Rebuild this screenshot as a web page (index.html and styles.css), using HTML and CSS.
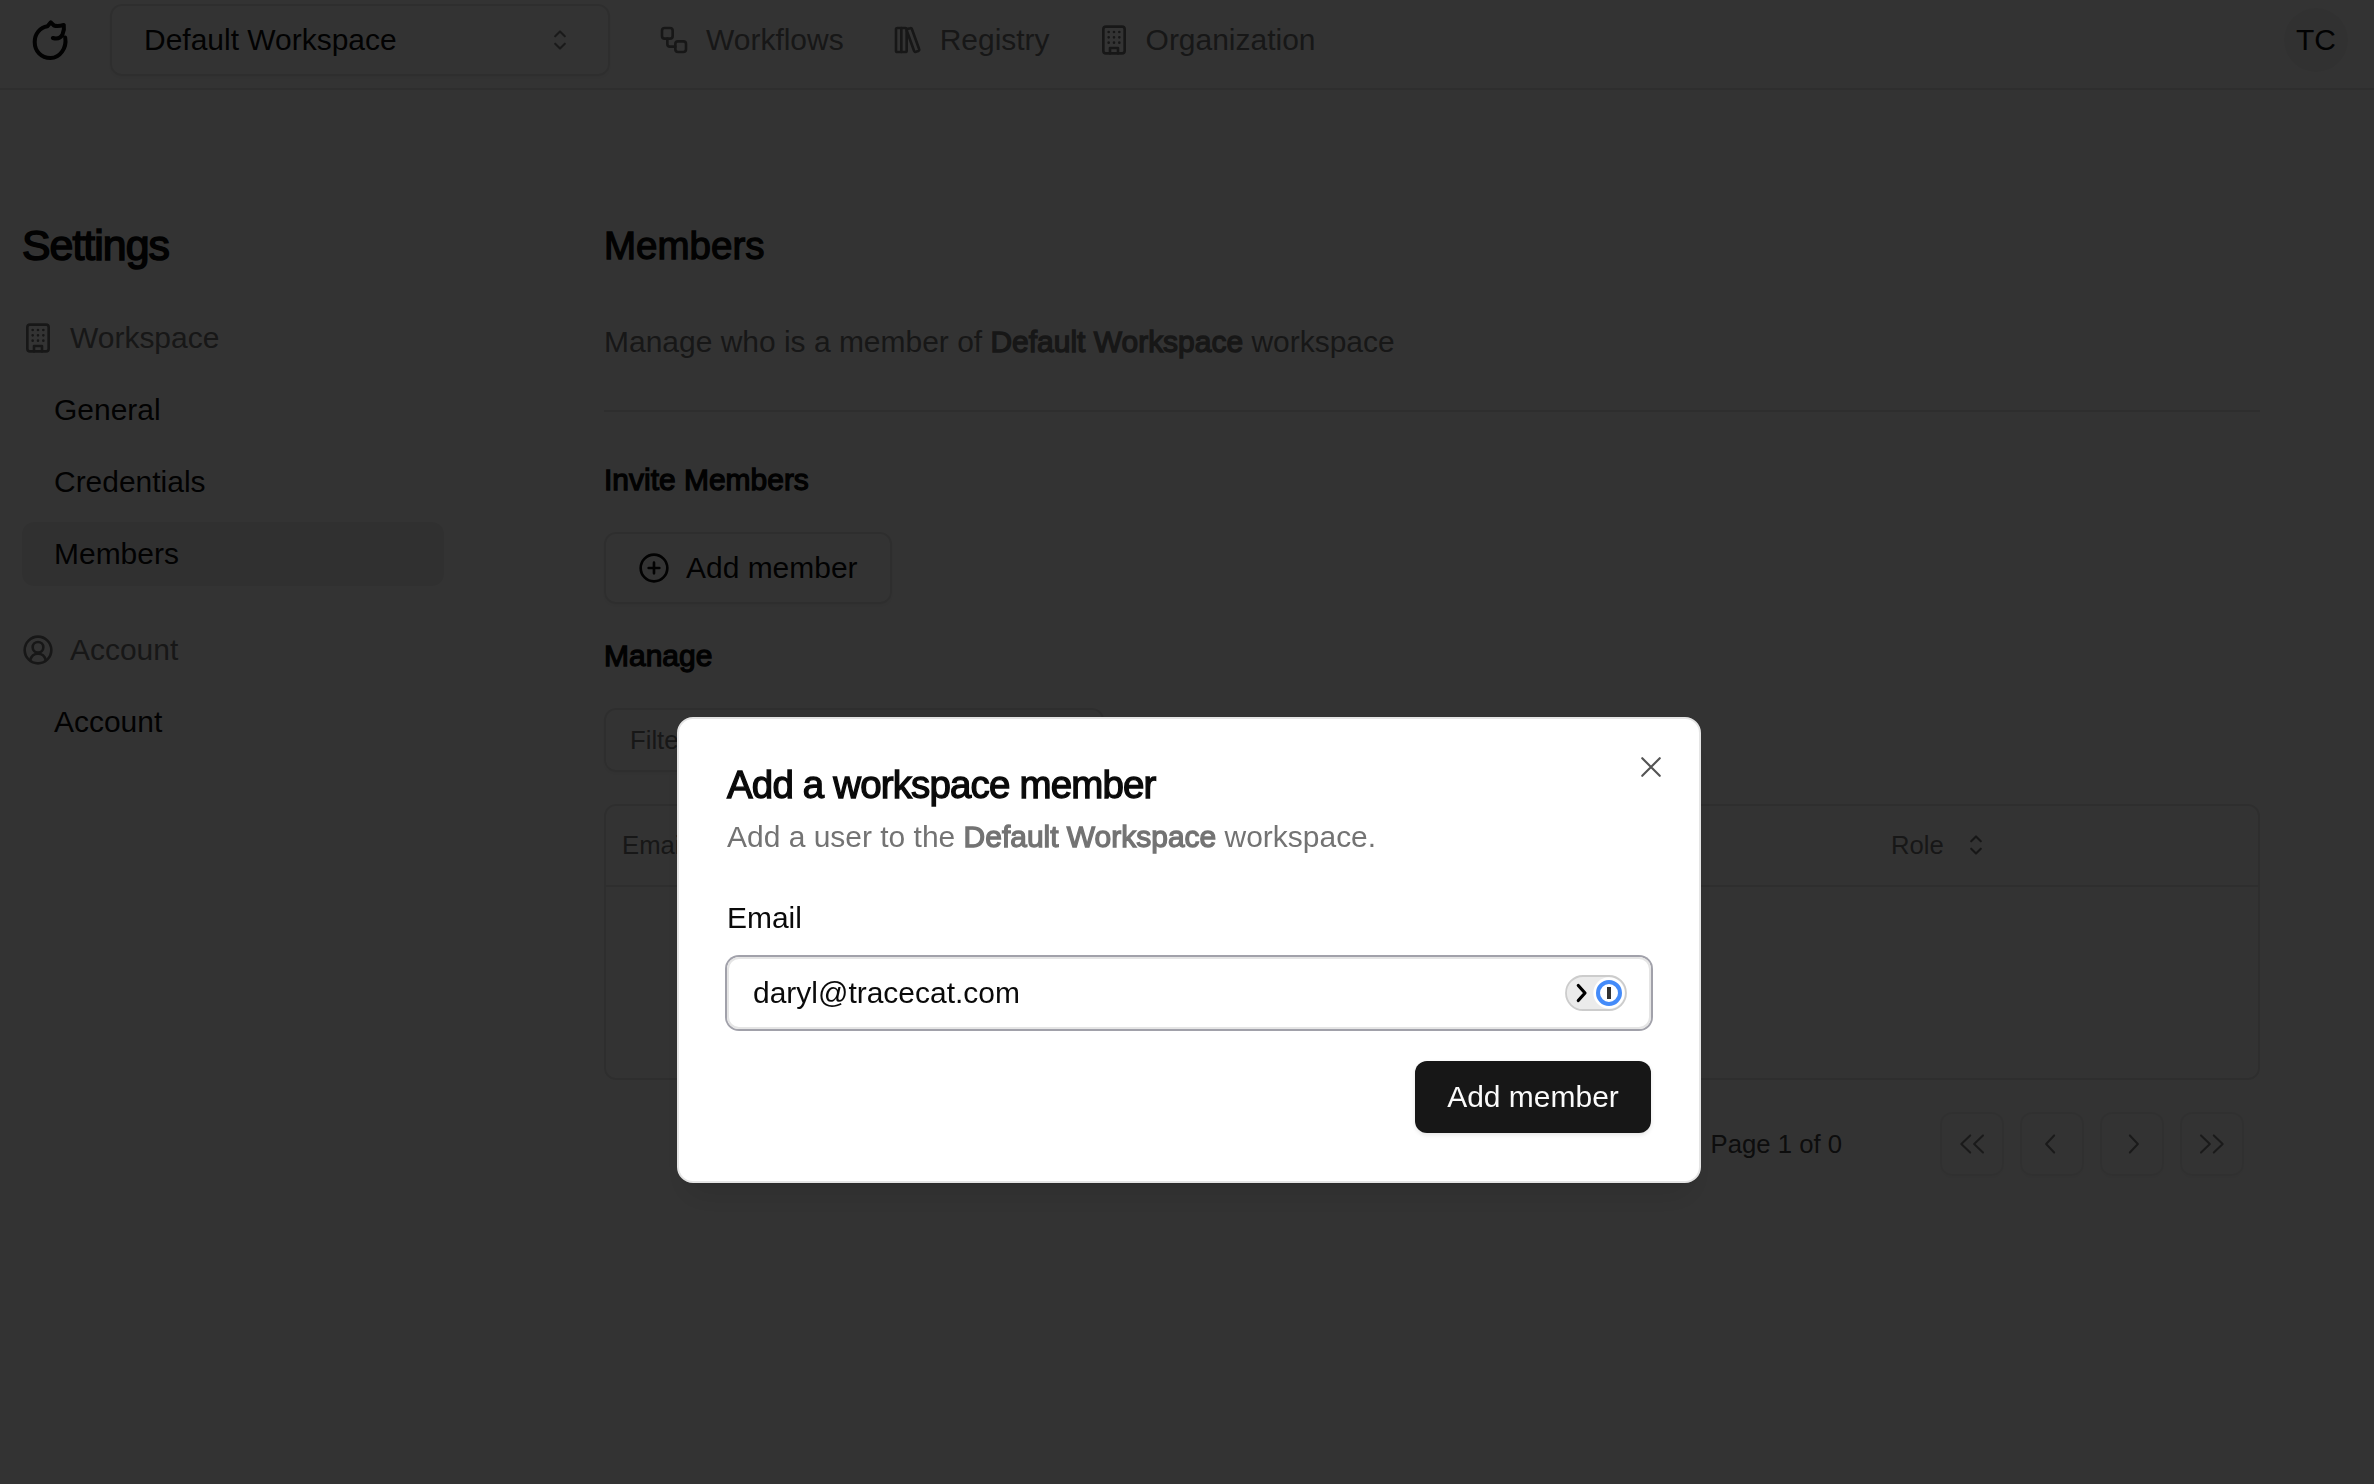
FILE: index.html
```html
<!DOCTYPE html>
<html lang="en">
<head>
<meta charset="utf-8">
<title>Workspace members</title>
<link rel="stylesheet" href="styles.css">
</head>
<body>
<svg class="sprite" aria-hidden="true">
  <symbol id="building" viewBox="0 0 24 24"><rect x="4" y="2" width="16" height="20" rx="2"/><path d="M9 22v-4h6v4M8 6h.01M16 6h.01M12 6h.01M12 10h.01M12 14h.01M16 10h.01M16 14h.01M8 10h.01M8 14h.01"/></symbol>
  <symbol id="sort" viewBox="0 0 15 15"><path d="M5.25 5.75 7.5 3.5l2.25 2.25M5.25 9.25 7.5 11.5l2.25-2.25"/></symbol>
</svg>

<div class="app">
  <header class="topbar">
    <svg class="logo" viewBox="0 0 40 44"><path d="M35.200 21.500C37 32 30 42 20.500 42 11 42 4.700 35 4.700 26 4.700 18 10 11.500 17.500 10.300L20.800 6.300 24 9.500C27 10.500 30 10 33.800 9 34.300 12 34 15 32.500 18.500 30.500 22.300 27.500 23.300 22.800 22"/></svg>
    <button class="select"><span>Default Workspace</span><svg class="radix faded"><use href="#sort"/></svg></button>
    <nav class="nav">
      <a><svg class="lucide" viewBox="0 0 24 24"><rect width="8" height="8" x="3" y="3" rx="2"/><path d="M7 11v4a2 2 0 0 0 2 2h4"/><rect width="8" height="8" x="13" y="13" rx="2"/></svg>Workflows</a>
      <a><svg class="lucide" viewBox="0 0 24 24"><rect width="8" height="18" x="3" y="3" rx="1"/><path d="M7 3v18M20.400 18.900c.2.5-.1 1.100-.6 1.300l-1.900.7c-.5.2-1.100-.1-1.300-.6L11.100 5.100c-.2-.5.1-1.100.6-1.300l1.900-.7c.5-.2 1.100.1 1.300.6Z"/></svg>Registry</a>
      <a><svg class="lucide" viewBox="0 0 24 24"><use href="#building"/></svg>Organization</a>
    </nav>
    <div class="avatar">TC</div>
  </header>

  <div class="page">
    <aside class="sidebar">
      <h2 class="sidebar-title">Settings</h2>
      <div class="group"><svg class="lucide"><use href="#building"/></svg>Workspace</div>
      <a class="item">General</a>
      <a class="item">Credentials</a>
      <a class="item active">Members</a>
      <div class="group second"><svg class="lucide" viewBox="0 0 24 24"><circle cx="12" cy="12" r="10"/><circle cx="12" cy="10" r="4"/><path d="M6.200 19.500C7 16.500 9 14.800 12 14.800s5 1.700 5.800 4.700"/></svg>Account</div>
      <a class="item">Account</a>
    </aside>

    <main class="content">
      <h1 class="title">Members</h1>
      <p class="lead">Manage who is a member of <b>Default Workspace</b> workspace</p>
      <hr class="rule">
      <h3 class="section">Invite Members</h3>
      <button class="outline"><svg class="lucide" viewBox="0 0 24 24"><circle cx="12" cy="12" r="10"/><path d="M8 12h8M12 8v8"/></svg>Add member</button>
      <h3 class="section manage">Manage</h3>
      <div class="filter">Filter emails...</div>
      <div class="table">
        <div class="thead"><span class="col-email">Email</span><span class="col-role">Role<svg class="radix"><use href="#sort"/></svg></span></div>
        <div class="tbody"></div>
      </div>
      <div class="pager">
        <span class="page-count">Page 1 of 0</span>
        <button class="page-btn"><svg class="radix" viewBox="0 0 15 15"><path d="M6.650 3.500 2.500 7.500l4.150 4M12.650 3.500 8.500 7.500l4.150 4"/></svg></button>
        <button class="page-btn"><svg class="radix" viewBox="0 0 15 15"><path d="M8.500 3.500 4.750 7.500l3.750 4"/></svg></button>
        <button class="page-btn"><svg class="radix" viewBox="0 0 15 15"><path d="m6.500 3.500 3.750 4-3.750 4"/></svg></button>
        <button class="page-btn"><svg class="radix" viewBox="0 0 15 15"><path d="m2.350 3.500 4.150 4-4.150 4M8.350 3.500l4.150 4-4.150 4"/></svg></button>
      </div>
    </main>
  </div>
</div>

<div class="overlay">
  <div class="dialog" role="dialog">
    <svg class="close" viewBox="0 0 15 15"><path d="m3.400 3.400 8.200 8.200M11.600 3.400l-8.200 8.200"/></svg>
    <h2 class="dialog-title">Add a workspace member</h2>
    <p class="dialog-text">Add a user to the <b>Default Workspace</b> workspace.</p>
    <label class="label">Email</label>
    <div class="input">
      <span>daryl@tracecat.com</span>
      <svg class="pill" viewBox="0 0 62 36"><rect x="1" y="1" width="60" height="34" rx="17" fill="#ebebeb"/><circle cx="44" cy="18" r="15.700" fill="#fff"/><rect x="1" y="1" width="60" height="34" rx="17" fill="none" stroke="#ccc" stroke-width="1.800"/><circle cx="44" cy="18" r="11" fill="none" stroke="#448bf9" stroke-width="4"/><rect x="42" y="12" width="4" height="12" fill="#333"/><path d="m13.300 10.500 6.700 7.500-6.700 7.500" fill="none" stroke="#000" stroke-width="3.200" stroke-linecap="round" stroke-linejoin="round"/></svg>
    </div>
    <button class="primary">Add member</button>
  </div>
</div>
</body>
</html>
```

FILE: styles.css
```css
* { box-sizing: border-box; margin: 0; padding: 0; }

body {
  font-family: "Liberation Sans", Arial, sans-serif;
  font-size: 29.970px;
  line-height: 40px;
  color: #0a0a0a;
  background: #fff;
  height: 1484px;
  overflow: hidden;
}

button { font: inherit; color: inherit; background: none; }
h1, h2, h3, b { font-weight: 400; -webkit-text-stroke: 1.3px currentColor; }

.sprite { position: absolute; width: 0; height: 0; }
.lucide, .radix, .logo, .close { fill: none; stroke: currentColor; stroke-linecap: round; stroke-linejoin: round; flex: none; }
.lucide { width: 32px; height: 32px; stroke-width: 2; }
.radix { width: 32px; height: 32px; stroke-width: 1; }

.topbar {
  display: flex;
  align-items: flex-start;
  height: 90px;
  padding: 4px 26px 0 30px;
  border-bottom: 2px solid #e5e5e5;
}
.logo { width: 40px; height: 44px; margin-top: 12px; stroke-width: 4; }
.select {
  display: flex;
  align-items: center;
  justify-content: space-between;
  width: 500px;
  height: 72px;
  margin-left: 40px;
  padding: 0 32px;
  border: 2px solid #e5e5e5;
  border-radius: 12px;
  box-shadow: 0 2px 4px rgba(0, 0, 0, .05);
}
.faded { opacity: .5; }
.nav { display: flex; gap: 48px; margin-left: 48px; height: 72px; align-items: center; color: #737373; }
.nav a { display: flex; align-items: center; gap: 16px; }
.avatar {
  width: 64px;
  height: 64px;
  margin: 4px 0 0 auto;
  border-radius: 50%;
  background: #f5f5f5;
  text-align: center;
  line-height: 64px;
}

.page { display: flex; }
.sidebar { width: 422px; margin-left: 22px; padding-top: 129px; }
.sidebar-title { font-size: 42.800px; line-height: 52px; letter-spacing: -.960px; -webkit-text-stroke-width: 1.600px; }
.group { display: flex; align-items: center; gap: 16px; height: 64px; margin: 35px 0 8px; color: #737373; }
.group.second { margin-top: 32px; }
.item { display: block; height: 64px; line-height: 64px; margin-bottom: 8px; padding-left: 32px; border-radius: 12px; }
.item.active { background: #f1f1f1; }

.content { width: 1656px; margin-left: 160px; padding-top: 130px; }
.title { font-size: 38.500px; line-height: 52px; }
.lead { margin-top: 50px; color: #737373; }
.rule { border: 0; height: 2px; background: #e5e5e5; margin: 48px 0; }
.section { font-size: 29.970px; line-height: 40px; }
.outline {
  display: flex;
  align-items: center;
  gap: 16px;
  height: 72px;
  width: 288px;
  margin-top: 32px;
  padding-left: 32px;
  border: 2px solid #e5e5e5;
  border-radius: 12px;
  box-shadow: 0 2px 4px rgba(0, 0, 0, .05);
}
.manage { margin-top: 32px; }
.filter {
  width: 500px;
  height: 64px;
  margin-top: 32px;
  padding-left: 24px;
  border: 2px solid #e5e5e5;
  border-radius: 12px;
  font-size: 25.700px;
  line-height: 60px;
  color: #737373;
  box-shadow: 0 2px 4px rgba(0, 0, 0, .05);
}
.table { margin-top: 32px; height: 276px; border: 2px solid #e5e5e5; border-radius: 12px; }
.thead {
  display: grid;
  grid-template-columns: 1269px 1fr;
  align-items: center;
  height: 81px;
  padding: 0 0 1px 16px;
  border-bottom: 2px solid #e5e5e5;
  font-size: 25.700px;
  color: #737373;
}
.col-role { display: flex; align-items: center; gap: 16px; }
.pager { display: flex; align-items: center; justify-content: flex-end; gap: 16px; margin-top: 32px; padding-right: 16px; font-size: 25.700px; }
.page-count { margin-right: 82px; color: #404040; }
.page-btn {
  display: flex;
  align-items: center;
  justify-content: center;
  width: 64px;
  height: 64px;
  border: 2px solid #e5e5e5;
  border-radius: 12px;
  color: #0a0a0a;
  opacity: .5;
  box-shadow: 0 2px 4px rgba(0, 0, 0, .05);
}

.overlay { position: fixed; inset: 0; background: rgba(0, 0, 0, .8); }
.dialog {
  position: absolute;
  left: 677px;
  top: 717px;
  width: 1024px;
  height: 466px;
  padding: 46px 48px 0;
  display: flex;
  flex-direction: column;
  background: #fff;
  border: 2px solid #e5e5e5;
  border-radius: 16px;
  box-shadow: 0 21px 32px -6px rgba(0, 0, 0, .1), 0 8px 12px -8px rgba(0, 0, 0, .1);
}
.close { position: absolute; right: 32px; top: 32px; width: 32px; height: 32px; stroke-width: 1; color: #545454; }
.dialog-title { font-size: 38.500px; line-height: 40px; letter-spacing: -.850px; }
.dialog-text { margin-top: 12px; color: #737373; }
.label { margin-top: 41px; }
.input {
  display: flex;
  align-items: center;
  justify-content: space-between;
  height: 72px;
  margin-top: 19px;
  padding: 0 22px 0 24px;
  border: 2px solid #e5e5e5;
  border-radius: 12px;
  box-shadow: 0 0 0 2px #a1a1aa;
}
.pill { width: 62px; height: 36px; }
.primary {
  align-self: flex-end;
  width: 236px;
  height: 72px;
  margin-top: 32px;
  border: 0;
  border-radius: 12px;
  background: #171717;
  color: #fafafa;
  box-shadow: 0 2px 4px rgba(0, 0, 0, .1);
}
```
